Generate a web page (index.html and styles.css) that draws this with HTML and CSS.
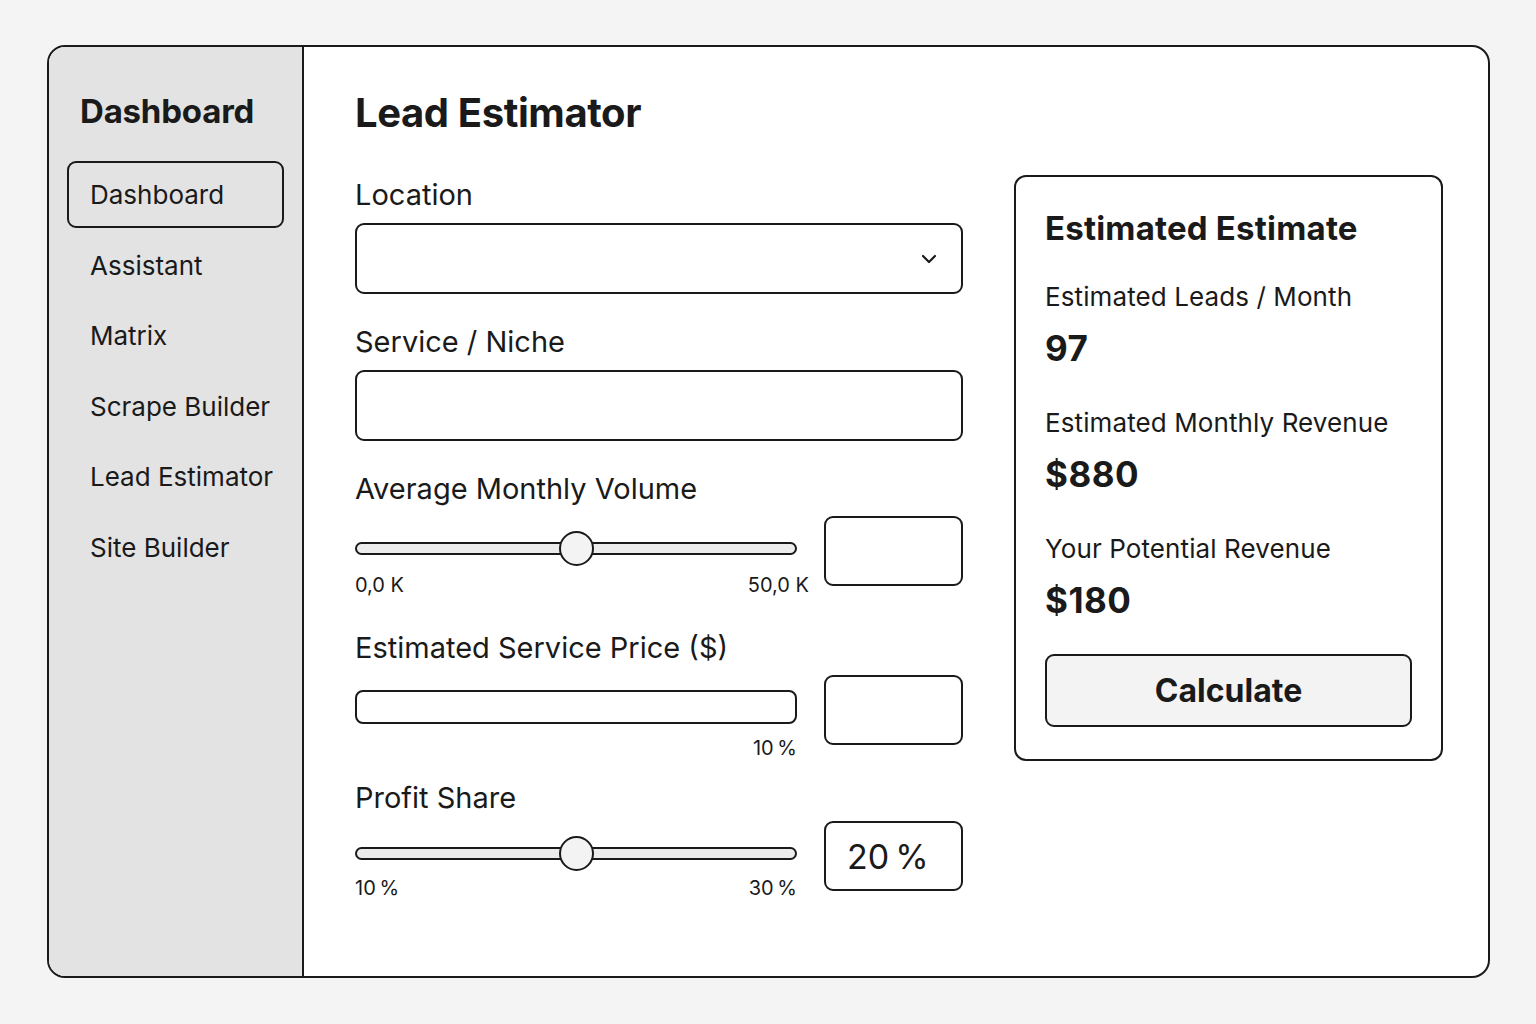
FILE: index.html
```html
<!DOCTYPE html>
<html>
<head>
<meta charset="utf-8">
<link rel="stylesheet" href="styles.css">
</head>
<body>
<div class="frame">
  <aside class="sidebar">
    <h2 class="side-title">Dashboard</h2>
    <nav class="nav">
      <div class="nav-item active">Dashboard</div>
      <div class="nav-item">Assistant</div>
      <div class="nav-item">Matrix</div>
      <div class="nav-item">Scrape Builder</div>
      <div class="nav-item">Lead Estimator</div>
      <div class="nav-item">Site Builder</div>
    </nav>
  </aside>
  <main class="main">
    <h1 class="page-title">Lead Estimator</h1>
    <div class="content">
      <section class="form">
        <div class="field f-location">
          <div class="label">Location</div>
          <div class="select">
            <svg class="chev" width="16" height="10" viewBox="0 0 16 10"><path d="M2 2 L8 8 L14 2" fill="none" stroke="#1a1a1a" stroke-width="2.2" stroke-linecap="round" stroke-linejoin="round"/></svg>
          </div>
        </div>
        <div class="field f-service">
          <div class="label">Service / Niche</div>
          <div class="input"></div>
        </div>
        <div class="field f-volume">
          <div class="label">Average Monthly Volume</div>
          <div class="row">
            <div class="slider-col">
              <div class="track-wrap"><div class="track"></div><div class="thumb" style="left:50%"></div></div>
              <div class="scale vol"><span>0,0 K</span><span class="over">50,0 K</span></div>
            </div>
            <div class="box"></div>
          </div>
        </div>
        <div class="field f-price">
          <div class="label">Estimated Service Price ($)</div>
          <div class="row">
            <div class="slider-col">
              <div class="bar"></div>
              <div class="scale end"><span>10&#8201;%</span></div>
            </div>
            <div class="box"></div>
          </div>
        </div>
        <div class="field f-profit">
          <div class="label">Profit Share</div>
          <div class="row">
            <div class="slider-col">
              <div class="track-wrap"><div class="track"></div><div class="thumb" style="left:50%"></div></div>
              <div class="scale"><span>10&#8201;%</span><span>30&#8201;%</span></div>
            </div>
            <div class="box value">20&#8201;%</div>
          </div>
        </div>
      </section>
      <section class="card">
        <h3 class="card-title">Estimated Estimate</h3>
        <div class="stat-label first">Estimated Leads / Month</div>
        <div class="stat-value">97</div>
        <div class="stat-label">Estimated Monthly Revenue</div>
        <div class="stat-value">$880</div>
        <div class="stat-label">Your Potential Revenue</div>
        <div class="stat-value">$180</div>
        <button class="btn">Calculate</button>
      </section>
    </div>
  </main>
</div>
</body>
</html>
```
FILE: styles.css
```css
* { box-sizing: border-box; }
html, body { margin: 0; padding: 0; }
body {
  width: 1536px;
  height: 1024px;
  background: #f4f4f4;
  font-family: Inter, "Noto Sans", "Liberation Sans", sans-serif;
  color: #1a1a1a;
  overflow: hidden;
}
.frame {
  position: relative;
  margin: 45px 0 0 47px;
  width: 1443px;
  height: 933px;
  border: 2px solid #1a1a1a;
  border-radius: 18px;
  background: #fff;
  display: flex;
  overflow: hidden;
}
.sidebar {
  width: 255px;
  flex: none;
  background: #e3e3e3;
  border-right: 2px solid #1a1a1a;
  padding: 0 18px 0 18px;
}
.side-title {
  margin: 42px 0 0 13px;
  font-size: 33px;
  font-weight: 700;
  line-height: 44px;
  letter-spacing: -0.2px;
}
.nav { margin-top: 28px; display: flex; flex-direction: column; gap: 3.5px; }
.nav-item {
  height: 67px;
  display: flex;
  align-items: center;
  padding-left: 21px;
  font-size: 26px;
  font-weight: 400;
  border: 2px solid transparent;
  border-radius: 9px;
}
.nav-item.active { border-color: #1a1a1a; }

.main { flex: 1; padding: 0 0 0 51px; }
.page-title {
  margin: 42px 0 0 0;
  font-size: 40px;
  font-weight: 700;
  line-height: 48px;
  letter-spacing: -0.4px;
}
.content { display: flex; gap: 51px; margin-top: 38px; }
.form { width: 608px; flex: none; }
.label { font-size: 29px; line-height: 34px; height: 34px; }
.f-location { margin-top: 3px; }
.select, .input {
  margin-top: 11px;
  height: 71px;
  border: 2px solid #1a1a1a;
  border-radius: 9px;
  background: #fff;
  position: relative;
}
.select { display: flex; align-items: center; justify-content: flex-end; padding-right: 24px; }
.chev { display: block; }
.f-service { margin-top: 31px; }
.f-volume { margin-top: 31px; }
.row { display: flex; gap: 27px; margin-top: 10px; }
.slider-col { width: 442px; flex: none; padding-top: 15px; }
.track-wrap { position: relative; height: 34px; display: flex; align-items: center; }
.track {
  width: 100%;
  height: 13px;
  border: 2px solid #1a1a1a;
  border-radius: 7px;
  background: #ececec;
}
.thumb {
  position: absolute;
  top: 0;
  width: 35px;
  height: 35px;
  margin-left: -17px;
  border: 2px solid #1a1a1a;
  border-radius: 50%;
  background: #f3f3f3;
}
.scale {
  display: flex;
  justify-content: space-between;
  font-size: 20px;
  line-height: 24px;
  margin-top: 6px;
}
.scale.vol { margin-top: 8px; }
.scale .over { margin-right: -12px; }
.scale.end { justify-content: flex-end; margin-top: 12px; }
.box {
  width: 139px;
  height: 70px;
  border: 2px solid #1a1a1a;
  border-radius: 9px;
  background: #fff;
}
.box.value { display: flex; align-items: center; padding-left: 21px; font-size: 34px; }
.f-price { margin-top: 34px; }
.bar {
  height: 34px;
  border: 2px solid #1a1a1a;
  border-radius: 8px;
  background: #fff;
}
.f-price .slider-col { padding-top: 15px; }
.f-profit { margin-top: 21px; }
.f-profit .row { margin-top: 6px; }

.card {
  width: 429px;
  height: 586px;
  flex: none;
  border: 2px solid #1a1a1a;
  border-radius: 12px;
  padding: 29px 30px 0 29px;
}
.card-title {
  margin: 0;
  font-size: 33px;
  font-weight: 700;
  line-height: 44px;
  letter-spacing: 0.2px;
}
.stat-label { font-size: 26px; line-height: 32px; margin-top: 37px; letter-spacing: 0.1px; }
.stat-label.first { margin-top: 31px; }
.stat-value { font-size: 35px; font-weight: 700; line-height: 44px; margin-top: 13px; letter-spacing: 0.5px; }
.btn {
  margin-top: 32px;
  width: 367px;
  height: 73px;
  border: 2px solid #1a1a1a;
  border-radius: 9px;
  background: #f3f3f3;
  font-family: inherit;
  color: #1a1a1a;
  font-size: 32px;
  font-weight: 700;
}
```
